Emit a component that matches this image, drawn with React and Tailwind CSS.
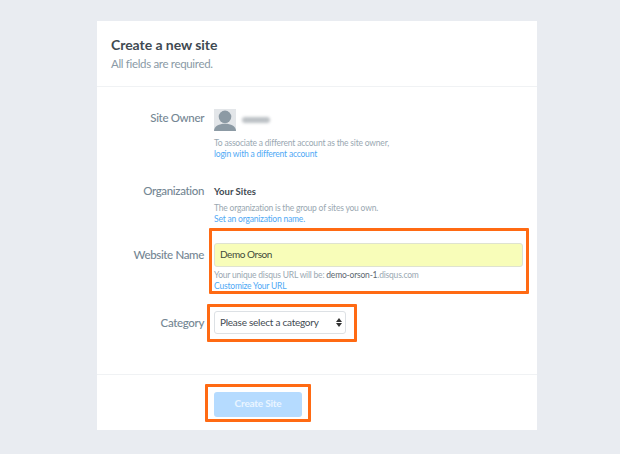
function Row({ label, labelClass, children, className }) {
    return (
        <div className={`flex ${className}`}>
            <div className={`w-[107px] shrink-0 text-right text-[11.5px] font-medium tracking-[-0.35px] text-[#748693] ${labelClass}`}>{label}</div>
            <div className="ml-[10px] w-[309px]">{children}</div>
        </div>
    );
}

function Highlight({ className }) {
    return <div className={`absolute rounded-[1px] border-[3px] border-[#ff6a13] ${className}`}></div>;
}

export default function App() {
    return (
        <div className="h-[454px] w-[620px] overflow-hidden bg-[#e9ecf1] pl-[97px] pt-[21px] font-['Lato',sans-serif]">
            <div className="relative h-[409px] w-[440px] bg-white">
                {/* Header */}
                <div className="h-[66px] border-b border-[#f0f2f4] pl-[14px] pt-[14px]">
                    <h1 className="text-[14px] font-bold leading-[20px] tracking-[-0.05px] text-[#3f4a52]">Create a new site</h1>
                    <p className="text-[11.5px] leading-[18px] tracking-[-0.33px] text-[#8a9aa6]">All fields are required.</p>
                </div>

                {/* Form */}
                <div className="h-[288px] border-b border-[#f0f2f4] pt-[22px]">
                    <Row label="Site Owner" labelClass="leading-[18px]">
                        <div className="flex items-center">
                            <div className="h-[22px] w-[22px] overflow-hidden bg-[#e3e6e9]">
                                <svg viewBox="0 0 21 21" className="h-[22px] w-[22px]">
                                    <circle cx="10.5" cy="7.5" r="6" fill="#8c9aa4" />
                                    <path d="M0 21 C0 16 5 14 10.5 14 C16 14 21 16 21 21 Z" fill="#8c9aa4" />
                                </svg>
                            </div>
                            <div className="ml-[6px] h-[6px] w-[28px] rounded-sm bg-[#bcc1c5] blur-[1.5px]"></div>
                        </div>
                        <p className="mt-[7px] text-[8.5px] leading-[11px] tracking-[-0.2px] text-[#9aa8b2]">To associate a different account as the site owner,</p>
                        <p className="text-[8.5px] leading-[10px] tracking-[-0.2px] text-[#4fa9f5]">login with a different account</p>
                    </Row>

                    <Row label="Organization" labelClass="leading-[16px]" className="mt-[24px]">
                        <p className="text-[9.5px] font-bold leading-[18px] text-[#3f4a52]">Your Sites</p>
                        <p className="mt-[2px] text-[8.5px] leading-[11px] tracking-[-0.2px] text-[#9aa8b2]">The organization is the group of sites you own.</p>
                        <p className="text-[8.5px] leading-[10px] tracking-[-0.2px] text-[#4fa9f5]">Set an organization name.</p>
                    </Row>

                    <Row label="Website Name" labelClass="leading-[24px]" className="mt-[19px]">
                        <div className="flex h-[24px] items-center rounded-[3px] border border-[#dfe3d0] bg-[#f8fdb9] pb-[1px] pl-[5px] text-[10px] tracking-[-0.45px] text-[#3f4a3a]">Demo Orson</div>
                        <p className="mt-[2px] text-[8.5px] leading-[12px] tracking-[-0.2px] text-[#9aa8b2]">Your unique disqus URL will be: <span className="text-[#5d6870]">demo-orson-1</span>.disqus.com</p>
                        <p className="text-[8.5px] leading-[10px] tracking-[-0.2px] text-[#4fa9f5]">Customize Your URL</p>
                    </Row>

                    <Row label="Category" labelClass="leading-[24px]" className="mt-[20px]">
                        <div className="flex h-[23px] w-[132px] items-center justify-between rounded-[3px] border border-[#dde1e5] bg-white pl-[5px] pr-[3px] text-[10px] tracking-[-0.25px] text-[#3f4a52]">
                            <span>Please select a category</span>
                            <span className="flex flex-col items-center gap-[1px]">
                                <span className="h-0 w-0 border-x-[3px] border-b-[4px] border-x-transparent border-b-[#333]"></span>
                                <span className="h-0 w-0 border-x-[3px] border-t-[4px] border-x-transparent border-t-[#333]"></span>
                            </span>
                        </div>
                    </Row>
                </div>

                {/* Footer */}
                <div className="pl-[117px] pt-[14px]">
                    <button className="h-[25px] w-[88px] rounded-[3px] bg-[#b5dbff] pb-[2px] text-[10px] font-bold tracking-[-0.2px] text-[#eaf5ff]">Create Site</button>
                </div>

                {/* Orange marks from the screenshot */}
                <Highlight className="left-[112px] top-[207px] h-[66px] w-[320px]" />
                <Highlight className="left-[110px] top-[283px] h-[38px] w-[150px]" />
                <Highlight className="left-[108px] top-[363px] h-[38px] w-[106px]" />
            </div>
        </div>
    );
}
